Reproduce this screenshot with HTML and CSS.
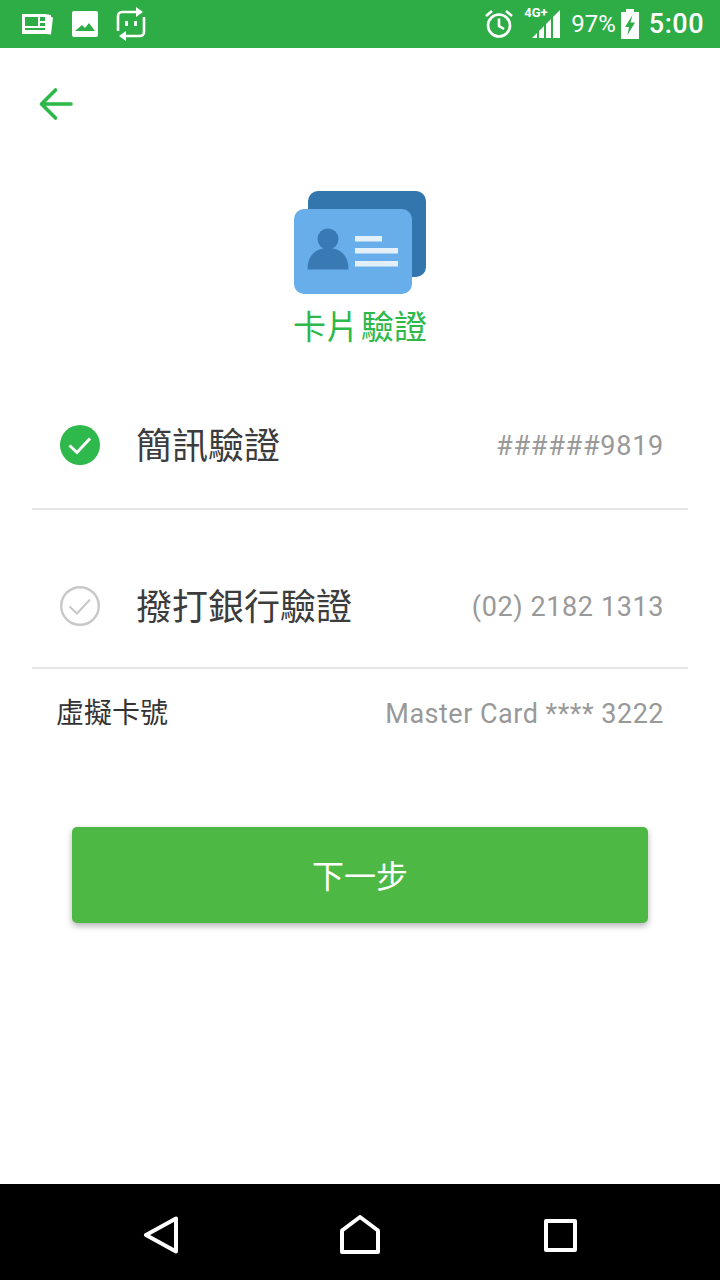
FILE: index.html
```html
<!DOCTYPE html>
<html lang="zh-Hant">
<head>
  <meta charset="utf-8">
  <title>卡片驗證</title>
  <link rel="stylesheet" href="styles.css">
</head>
<body>
  <div class="phone">
    <header class="status">
      <div class="status-left">
        <svg class="ic-news" width="32" height="24" viewBox="0 0 32 24"><path fill="#fff" fill-rule="evenodd" d="M1 2h23l6 1v2l2 .5-2 17-5-.5H1zM4 5v9h13V5zm15 0v4h5V5zm0 6v3h5v-3zM4 16v2h20v-2z"/></svg>
        <svg class="ic-pic" width="26" height="26" viewBox="0 0 26 26"><path fill="#fff" fill-rule="evenodd" d="M2 0h22a2 2 0 0 1 2 2v22a2 2 0 0 1-2 2H2a2 2 0 0 1-2-2V2a2 2 0 0 1 2-2zm1 20h20l-6-8-4 5-3-3z"/></svg>
        <svg class="ic-bot" width="30" height="34" viewBox="0 0 30 34" fill="none" stroke="#fff" stroke-width="2.6"><path d="M22 5H6a4 4 0 0 0-4 4v15M28 10v15a4 4 0 0 1-4 4H8"/><path fill="#fff" stroke="none" d="M20 0l7 5-7 5zM10 24l-7 5 7 5z"/><path stroke-width="2.800" d="M10.500 14v5M19.500 14v5"/></svg>
      </div>
      <div class="status-right">
        <svg class="ic-alarm" width="30" height="30" viewBox="0 0 30 30" fill="none" stroke="#fff" stroke-width="2.600"><circle cx="15" cy="16.500" r="11"/><path d="M15 9.500v7.500l5 3M2 7l6-5M28 7l-6-5"/></svg>
        <div class="signal">
          <span class="net">4G+</span>
          <svg width="30" height="30" viewBox="0 0 30 30"><path fill="#fff" d="M2 29l5-5v5zM9 29v-7l5-5v12zM16 29V15l5-5v19zM23 29V8l7-7v28z"/></svg>
        </div>
        <span class="pct">97%</span>
        <svg class="ic-batt" width="18" height="30" viewBox="0 0 18 30"><path fill="#fff" fill-rule="evenodd" d="M5 0h8v3h5v27H0V3h5zM11.500 6L4 18h4l-1.500 8L14 13.500H9.500z"/></svg>
        <span class="clock">5:00</span>
      </div>
    </header>

    <main class="content">
      <div class="topbar">
        <svg width="34" height="32" viewBox="0 0 34 32" fill="none" stroke="#2db84a" stroke-width="3.600" stroke-linecap="round" stroke-linejoin="round"><path d="M32 16H3M16.500 2L2.500 16l14 14"/></svg>
      </div>

      <div class="hero">
        <svg width="132" height="103" viewBox="0 0 132 103">
          <rect x="14" y="0" width="118" height="86" rx="10" fill="#3276ad"/>
          <rect x="0" y="18" width="118" height="85" rx="10" fill="#68aeea"/>
          <circle cx="34" cy="48" r="10.500" fill="#3979b4"/>
          <path fill="#3979b4" d="M13.500 78.500c0-14 8-21.500 20.500-21.500s20.500 7.500 20.500 21.500z"/>
          <path fill="#e3f0fa" d="M61 45h27v5.500H61zM61 57h43v5.500H61zM61 70h43v5.500H61z"/>
        </svg>
        <h1 class="title">卡片 驗證</h1>
      </div>

      <div class="verify">
        <div class="verify-row">
          <svg width="40" height="40" viewBox="0 0 40 40"><circle cx="20" cy="20" r="20" fill="#2fb84c"/><path d="M9.500 20.500l7.500 7 13-14" fill="none" stroke="#fff" stroke-width="3"/></svg>
          <span class="verify-name">簡訊驗證</span>
          <span class="verify-val">######9819</span>
        </div>
        <div class="verify-row">
          <svg width="40" height="40" viewBox="0 0 40 40" fill="none" stroke="#c8c8c8"><circle cx="20" cy="20" r="18.800" stroke-width="2.400"/><path d="M9.500 20.500l7.500 7 13-14" stroke-width="2"/></svg>
          <span class="verify-name">撥打銀行驗證</span>
          <span class="verify-val verify-phone">(02) 2182 1313</span>
        </div>
      </div>

      <div class="card-row">
        <span class="card-label">虛擬卡號</span>
        <span class="card-val">Master Card **** 3222</span>
      </div>

      <button class="next">下一步</button>
    </main>

    <nav class="navbar">
      <svg width="36" height="38" viewBox="0 0 36 38" fill="none" stroke="#fff" stroke-width="4" stroke-linejoin="round"><path d="M33 2.500v33L3 19z"/></svg>
      <svg width="40" height="40" viewBox="0 0 40 40" fill="none" stroke="#fff" stroke-width="4" stroke-linejoin="round"><path d="M2 15.500L20 2l18 13.500V37H2z"/></svg>
      <svg width="33" height="33" viewBox="0 0 33 33" fill="none" stroke="#fff" stroke-width="4" stroke-linejoin="round"><rect x="2" y="2" width="29" height="29"/></svg>
    </nav>
  </div>
</body>
</html>
```

FILE: styles.css
```css
* { box-sizing: border-box; }
html, body { margin: 0; padding: 0; }
body { background: #fff; font-family: Roboto, "Noto Sans CJK TC", sans-serif; }
.phone { width: 720px; height: 1280px; display: flex; flex-direction: column; overflow: hidden; }

.status { height: 48px; flex: none; background: #2ead47; color: #fff; display: flex; justify-content: space-between; align-items: center; padding: 0 16px 0 21px; }
.status-left { display: flex; align-items: center; }
.ic-news { margin-right: 19px; }
.ic-pic { margin-right: 18px; }
.status-right { display: flex; align-items: center; }
.ic-alarm { margin-right: 8px; }
.signal { position: relative; width: 38px; height: 32px; margin-right: 11px; display: flex; justify-content: flex-end; align-items: flex-end; }
.signal svg { margin-bottom: 1px; }
.net { position: absolute; left: 2px; top: -2px; font-size: 13px; font-weight: 700; line-height: 14px; }
.pct { font-size: 24px; margin-right: 5px; }
.ic-batt { margin-right: 10px; }
.clock { font-size: 27px; font-weight: 500; letter-spacing: 0.5px; }

.content { flex: 1; }
.topbar { height: 143px; padding: 40px 0 0 39px; }
.topbar svg { display: block; }
.hero { display: flex; flex-direction: column; align-items: center; }
.hero svg { display: block; }
.title { margin: 12px 0 0; font-size: 33px; font-weight: 400; line-height: 43px; color: #2db84a; word-spacing: -6px; }

.verify { margin: 0 32px; padding-top: 38px; }
.verify-row { padding: 0 24px 0 28px; display: flex; align-items: center; border-bottom: 2px solid #e6e6e6; }
.verify-row:first-child { height: 123px; padding-bottom: 6px; }
.verify-row:last-child { height: 159px; padding-top: 34px; }
.verify-name { margin-left: 36px; padding-top: 4px; font-size: 36px; line-height: 48px; color: #3c3c3c; }
.verify-val { margin-left: auto; padding-top: 2px; font-size: 27px; letter-spacing: 0.75px; color: #999; }
.verify-phone { letter-spacing: 0.6px; }

.card-row { margin: 0 56px; height: 88px; display: flex; justify-content: space-between; align-items: center; }
.card-label { padding-bottom: 4px; font-size: 28px; color: #333; }
.card-val { padding-top: 2px; font-size: 27px; letter-spacing: 0.5px; color: #999; }

.next { display: block; width: 576px; height: 96px; margin: 70px auto 0; padding-bottom: 4px; border: 0; border-radius: 5px; background: #4db944; color: #fff; font-family: inherit; font-size: 32px; box-shadow: 0 3px 6px rgba(0,0,0,0.3); }

.navbar { height: 96px; flex: none; background: #000; display: flex; align-items: center; padding: 6px 0 0 143px; }
.navbar svg:nth-child(2) { margin-left: 161px; }
.navbar svg:nth-child(3) { margin-left: 164px; }
```
